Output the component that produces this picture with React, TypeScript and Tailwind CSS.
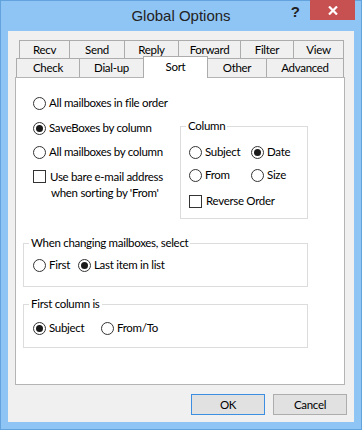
import React from 'react';

const row1 = [
  { label: 'Recv', w: 'w-[51px]' },
  { label: 'Send', w: 'w-[56px]' },
  { label: 'Reply', w: 'w-[55px]' },
  { label: 'Forward', w: 'w-[63px]' },
  { label: 'Filter', w: 'w-[54px]' },
  { label: 'View', w: 'w-[51px]' },
];

const row2 = [
  { label: 'Check', w: 'w-[64px]' },
  { label: 'Dial-up', w: 'w-[65px]' },
  { label: 'Sort', w: 'w-[65px]', active: true },
  { label: 'Other', w: 'w-[60px]' },
  { label: 'Advanced', w: 'w-[78px]' },
];

function Radio({ label, checked = false }: { label: string; checked?: boolean }) {
  return (
    <div className="flex items-center h-[16px]">
      <span className="w-[13px] h-[13px] rounded-full border border-[#333333] bg-white flex items-center justify-center shrink-0">
        {checked && <span className="w-[7px] h-[7px] rounded-full bg-[#1a1a1a]" />}
      </span>
      <span className="ml-[3px] whitespace-nowrap">{label}</span>
    </div>
  );
}

function Check() {
  return <span className="w-[13px] h-[13px] border border-[#333333] bg-white shrink-0" />;
}

function Group({ title, className, children }: { title: string; className: string; children: React.ReactNode }) {
  return (
    <fieldset className={`border border-[#dcdcdc] ${className}`}>
      <legend className="ml-[5px] px-[2px] leading-[16px]">{title}</legend>
      {children}
    </fieldset>
  );
}

export default function App() {
  return (
    <div className="w-[362px] h-[430px] bg-[#8fc5f5] border border-[#62a3de] flex flex-col text-[11.5px] tracking-[-0.3px] text-black font-['Lato','Liberation_Sans',sans-serif]">
      {/* title bar */}
      <div className="h-[30px] flex shrink-0 tracking-normal">
        <div className="w-[90px]" />
        <div className="flex-1 text-center text-[15px] leading-[30px] text-[#222222] font-['Liberation_Sans',sans-serif]">Global Options</div>
        <div className="w-[90px] flex justify-end items-start pr-[6px]">
          <span className="mt-[3px] mr-[10px] text-[15px] font-bold leading-[16px] text-[#222222] font-['Liberation_Sans',sans-serif]">?</span>
          <div className="w-[45px] h-[20px] -mt-px bg-[#c75050] flex items-center justify-center">
            <svg width="10" height="9" viewBox="0 0 10 9">
              <path d="M1 0.5 L9 8.5 M9 0.5 L1 8.5" stroke="white" strokeWidth="2.2" />
            </svg>
          </div>
        </div>
      </div>

      {/* client */}
      <div className="mx-[7px] h-[391px] bg-[#f0f0f0] flex flex-col shrink-0">
        {/* tabs */}
        <div className="pt-[9px] flex flex-col">
          <div className="flex pl-[11px]">
            {row1.map((t, i) => (
              <div key={t.label} className={`${t.w} h-[18px] ${i > 0 ? '-ml-px' : ''} border border-b-0 border-[#acacac] bg-[#f0f0f0] flex items-center justify-center leading-[16px]`}>
                {t.label}
              </div>
            ))}
          </div>
          <div className="flex pl-[8px] items-end">
            {row2.map((t, i) =>
              t.active ? (
                <div key={t.label} className={`${t.w} h-[22px] -mt-[2px] -mb-px -ml-px relative z-10 border border-b-0 border-[#acacac] bg-white flex justify-center pt-[2px] leading-[16px]`}>
                  {t.label}
                </div>
              ) : (
                <div key={t.label} className={`${t.w} h-[19px] ${i > 0 ? '-ml-px' : ''} border border-b-0 border-[#acacac] bg-[#f0f0f0] flex items-center justify-center leading-[16px]`}>
                  {t.label}
                </div>
              )
            )}
          </div>
        </div>

        {/* panel */}
        <div className="ml-[7px] w-[330px] h-[308px] border border-[#b4b4b4] bg-white pl-[7px]">
          <div className="flex h-[157px]">
            <div className="w-[157px] pl-[10px] pt-[17px] flex flex-col">
              <Radio label="All mailboxes in file order" />
              <div className="mt-[9px]"><Radio label="SaveBoxes by column" checked /></div>
              <div className="mt-[8px]"><Radio label="All mailboxes by column" /></div>
              <div className="mt-[9px] flex items-start">
                <span className="mt-[1px] flex"><Check /></span>
                <span className="ml-[4px] leading-[16px] whitespace-nowrap">
                  Use bare e-mail address
                  <br />
                  <span className="ml-[1px]">when sorting by 'From'</span>
                </span>
              </div>
            </div>
            <Group title="Column" className="w-[128px] h-[101px] mt-[40px]">
              <div className="pl-[8px] pt-[10px] grid grid-cols-[62px_1fr] gap-y-[7px]">
                <Radio label="Subject" />
                <Radio label="Date" checked />
                <Radio label="From" />
                <Radio label="Size" />
                <div className="col-span-2 flex items-center h-[16px] mt-[3px]">
                  <Check />
                  <span className="ml-[4px]">Reverse Order</span>
                </div>
              </div>
            </Group>
          </div>

          <Group title="When changing mailboxes, select" className="w-[285px] h-[52px]">
            <div className="pl-[9px] pt-[6px] flex">
              <div className="w-[45px]"><Radio label="First" /></div>
              <Radio label="Last item in list" checked />
            </div>
          </Group>

          <Group title="First column is" className="w-[285px] h-[52px] mt-[9px]">
            <div className="pl-[9px] pt-[8px] flex">
              <div className="w-[68px]"><Radio label="Subject" checked /></div>
              <Radio label="From/To" />
            </div>
          </Group>
        </div>

        {/* buttons */}
        <div className="flex justify-end gap-[8px] pr-[7px] mt-[9px]">
          <button className="w-[74px] h-[21px] border border-[#3c8fe0] bg-[#e1e1e1] leading-[19px]">OK</button>
          <button className="w-[74px] h-[21px] border border-[#adadad] bg-[#e1e1e1] leading-[19px]">Cancel</button>
        </div>
      </div>
    </div>
  );
}
